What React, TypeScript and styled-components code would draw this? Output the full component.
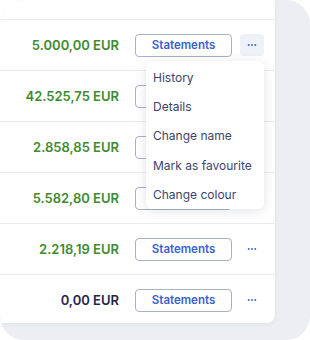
import styled, { createGlobalStyle } from "styled-components";

const GlobalStyle = createGlobalStyle`
  html, body {
    margin: 0;
    padding: 0;
    background: #ffffff;
    font-family: Inter, "Noto Sans", sans-serif;
  }
`;

const Panel = styled.div`
  width: 310px;
  height: 340px;
  background: #eceef3;
  border-radius: 24px;
  overflow: hidden;
`;

const Card = styled.div`
  width: 275px;
  height: 323px;
  background: #ffffff;
  border-bottom-right-radius: 8px;
  box-shadow: 0 1px 4px rgba(30, 40, 80, 0.06);
  display: flex;
  flex-direction: column;
`;

const HeaderSpace = styled.div`
  height: 19px;
  flex-shrink: 0;
`;

const Row = styled.div`
  box-sizing: border-box;
  height: 51px;
  flex-shrink: 0;
  display: flex;
  align-items: center;
  border-top: 1px solid #e9ebf0;
  padding-right: 11px;
`;

const Amount = styled.div<{ $zero?: boolean }>`
  width: 119px;
  text-align: right;
  margin-right: 16px;
  font-size: 13px;
  font-weight: 600;
  color: ${(p) => (p.$zero ? "#1e2849" : "#3f8b2f")};
  white-space: nowrap;
`;

const StatementsButton = styled.button`
  box-sizing: border-box;
  width: 97px;
  height: 23px;
  margin-right: 8px;
  border: 1.5px solid #a9b0c2;
  border-radius: 4px;
  background: #ffffff;
  color: #3a5fcf;
  font-family: Inter, sans-serif;
  font-size: 11.5px;
  font-weight: 600;
  padding: 0;
  cursor: pointer;
`;

const MoreWrap = styled.div`
  position: relative;
  width: 24px;
  height: 22px;
`;

const MoreButton = styled.button<{ $active?: boolean }>`
  width: 24px;
  height: 22px;
  border: none;
  border-radius: 3px;
  padding: 0;
  background: ${(p) => (p.$active ? "#eef1f8" : "transparent")};
  display: flex;
  align-items: center;
  justify-content: center;
  cursor: pointer;
`;

const Menu = styled.div`
  position: absolute;
  top: 27px;
  right: 0;
  width: 118px;
  padding-top: 2px;
  background: #ffffff;
  border-radius: 6px;
  box-shadow: 0 2px 12px rgba(30, 40, 80, 0.13);
  z-index: 2;
`;

const MenuItem = styled.div`
  height: 29.2px;
  line-height: 29.2px;
  padding: 0 7px;
  font-size: 12px;
  color: #3b4470;
  white-space: nowrap;
  cursor: pointer;
`;

const rows = [
  { amount: "5.000,00 EUR", open: true },
  { amount: "42.525,75 EUR" },
  { amount: "2.858,85 EUR" },
  { amount: "5.582,80 EUR" },
  { amount: "2.218,19 EUR" },
  { amount: "0,00 EUR", zero: true },
];

const menuItems = ["History", "Details", "Change name", "Mark as favourite", "Change colour"];

function Dots() {
  return (
    <svg width="10" height="4" viewBox="0 0 10 4">
      <circle cx="1.7" cy="2" r="0.95" fill="#3a5fcf" />
      <circle cx="5" cy="2" r="0.95" fill="#3a5fcf" />
      <circle cx="8.3" cy="2" r="0.95" fill="#3a5fcf" />
    </svg>
  );
}

export default function App() {
  return (
    <>
      <GlobalStyle />
      <Panel>
        <Card>
          <HeaderSpace />
          {rows.map((r) => (
            <Row key={r.amount}>
              <Amount $zero={r.zero}>{r.amount}</Amount>
              <StatementsButton>Statements</StatementsButton>
              <MoreWrap>
                <MoreButton $active={r.open}>
                  <Dots />
                </MoreButton>
                {r.open && (
                  <Menu>
                    {menuItems.map((m) => (
                      <MenuItem key={m}>{m}</MenuItem>
                    ))}
                  </Menu>
                )}
              </MoreWrap>
            </Row>
          ))}
        </Card>
      </Panel>
    </>
  );
}
